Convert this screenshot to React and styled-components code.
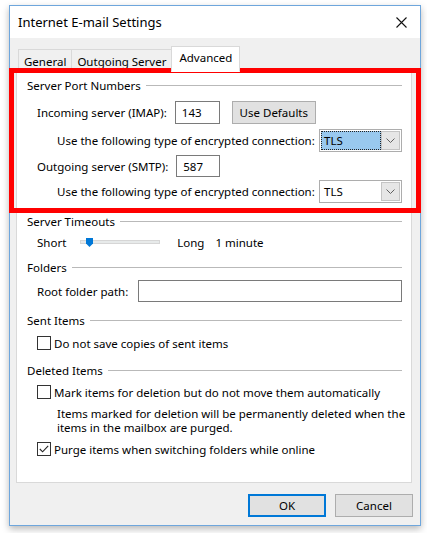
import React from 'react';
import styled, { createGlobalStyle } from 'styled-components';

const GlobalStyle = createGlobalStyle`
  html, body {
    margin: 0;
    padding: 0;
    background: #fff;
  }
  body {
    font-family: 'Noto Sans', 'Segoe UI', sans-serif;
    font-size: 11.5px;
    color: #000;
  }
`;

const Page = styled.div`
  position: relative;
  width: 427px;
  height: 533px;
  overflow: hidden;
  padding: 5px 0 0 9px;
  box-sizing: border-box;
`;

const Window = styled.div`
  width: 412px;
  height: 521px;
  box-sizing: border-box;
  border: 1px solid #6ea6dc;
  background: #f0f0f0;
  box-shadow: 0 3px 7px rgba(0, 0, 0, 0.28);
  display: flex;
  flex-direction: column;
`;

const TitleBar = styled.div`
  height: 32px;
  background: #fff;
  display: flex;
  align-items: center;
  justify-content: space-between;
  padding: 0 13px 0 8px;
  font-size: 13px;
`;

const Body = styled.div`
  flex: 1;
  display: flex;
  flex-direction: column;
  padding: 8px 8px 0 6px;
`;

const TabRow = styled.div`
  display: flex;
  align-items: flex-end;
  height: 26px;
  padding-left: 2px;
  margin-bottom: -1px;
`;

const Tab = styled.div`
  position: relative;
  z-index: ${p => (p.$active ? 1 : 0)};
  height: ${p => (p.$active ? '26px' : '23px')};
  box-sizing: border-box;
  padding: ${p => (p.$active ? '3px 7px 0' : '4px 5px 0')};
  border: 1px solid #d9d9d9;
  border-bottom: ${p => (p.$active ? '1px solid #fff' : 'none')};
  margin-left: ${p => (p.$first ? '0' : '-1px')};
  background: ${p => (p.$active ? '#fff' : '#f0f0f0')};
  white-space: nowrap;
`;

const Panel = styled.div`
  height: 412px;
  box-sizing: border-box;
  background: #fff;
  border: 1px solid #d9d9d9;
  padding: 5px 9px 0 10px;
  display: flex;
  flex-direction: column;
`;

const GroupTitle = styled.div`
  display: flex;
  align-items: center;
  height: 16px;
  margin-top: ${p => p.$top || 0}px;
  white-space: nowrap;

  &::after {
    content: '';
    flex: 1;
    height: 1px;
    margin-left: 5px;
    background: #b9b9b9;
  }
`;

const Row = styled.div`
  display: flex;
  align-items: center;
  height: ${p => p.$h || 16}px;
  margin-top: ${p => p.$top || 0}px;
  padding-left: ${p => p.$indent || 10}px;
  white-space: nowrap;
`;

const SpreadRow = styled(Row)`
  justify-content: space-between;
`;

const TextInput = styled.div`
  width: ${p => (p.$w ? `${p.$w}px` : 'auto')};
  flex: ${p => (p.$grow ? 1 : 'none')};
  height: ${p => p.$h || 22}px;
  box-sizing: border-box;
  border: 1px solid #7a7a7a;
  margin-left: ${p => p.$gap || 8}px;
  padding-left: 6px;
  display: flex;
  align-items: center;
`;

const Button = styled.div`
  width: ${p => p.$w || 78}px;
  height: 23px;
  box-sizing: border-box;
  margin-left: ${p => p.$gap || 0}px;
  background: #e1e1e1;
  border: 1px solid ${p => (p.$default ? '#0078d7' : '#adadad')};
  box-shadow: ${p => (p.$default ? 'inset 0 0 0 1px #0078d7' : 'none')};
  display: flex;
  align-items: center;
  justify-content: center;
`;

const Combo = styled.div`
  width: 83px;
  height: 23px;
  box-sizing: border-box;
  border: 1px solid #adadad;
  background: #fff;
  padding: 1px;
  display: flex;
`;

const ComboValue = styled.div`
  flex: 1;
  box-sizing: border-box;
  padding-left: 2px;
  display: flex;
  align-items: center;
  background: ${p => (p.$focused ? '#99c9ef' : '#fff')};
  border: 1px dotted ${p => (p.$focused ? '#222' : 'transparent')};
`;

const ComboArrow = styled.div`
  width: 19px;
  box-sizing: border-box;
  border: 1px solid #c4c4c4;
  background: #e6e6e6;
  display: flex;
  align-items: center;
  justify-content: center;
`;

const Slider = styled.div`
  position: relative;
  width: 80px;
  height: 4px;
  box-sizing: border-box;
  margin: 0 17px 0 14px;
  background: #e7eaea;
  border: 1px solid #d6d6d6;
`;

const Thumb = styled.svg`
  position: absolute;
  left: 5px;
  top: -3px;
`;

const Spacer = styled.span`
  display: inline-block;
  width: ${p => p.$w}px;
`;

const Check = styled.div`
  width: 14px;
  height: 14px;
  box-sizing: border-box;
  border: 1px solid #333;
  background: #fff;
  margin-right: 3px;
  display: flex;
  align-items: center;
  justify-content: center;
`;

const Note = styled.div`
  margin-top: ${p => p.$top || 0}px;
  padding-left: 30px;
  line-height: 14px;
  white-space: nowrap;
`;

const Footer = styled.div`
  display: flex;
  justify-content: flex-end;
  gap: 9px;
  padding: 11px 0 0;
  margin-right: -1px;
`;

const Highlight = styled.div`
  position: absolute;
  left: 9px;
  top: 68px;
  width: 412px;
  height: 145px;
  box-sizing: border-box;
  border: 5px solid #ff0000;
  pointer-events: none;
`;

const Chevron = () => (
  <svg width="9" height="5" viewBox="0 0 9 5">
    <path d="M0.5 0.5 L4.5 4.5 L8.5 0.5" fill="none" stroke="#606060" strokeWidth="1" />
  </svg>
);

const CheckBox = ({ checked }) => (
  <Check>
    {checked && (
      <svg width="10" height="8" viewBox="0 0 10 8">
        <path d="M0.8 4 L3.6 6.8 L9.2 0.8" fill="none" stroke="#222" strokeWidth="1.1" />
      </svg>
    )}
  </Check>
);

const CloseIcon = () => (
  <svg width="11" height="11" viewBox="0 0 11 11">
    <path d="M0.5 0.5 L10.5 10.5 M10.5 0.5 L0.5 10.5" stroke="#111" strokeWidth="1.1" />
  </svg>
);

const ComboBox = ({ value, focused }) => (
  <Combo>
    <ComboValue $focused={focused}>{value}</ComboValue>
    <ComboArrow>
      <Chevron />
    </ComboArrow>
  </Combo>
);

export default function App() {
  return (
    <Page>
      <GlobalStyle />
      <Window>
        <TitleBar>
          <span>Internet E-mail Settings</span>
          <CloseIcon />
        </TitleBar>
        <Body>
          <TabRow>
            <Tab $first>General</Tab>
            <Tab>Outgoing Server</Tab>
            <Tab $active>Advanced</Tab>
          </TabRow>
          <Panel>
            <GroupTitle>Server Port Numbers</GroupTitle>
            <Row $top={7} $h={24}>
              Incoming server (IMAP):
              <TextInput $w={45} $h={23}>143</TextInput>
              <Button $w={84} $gap={12}>Use Defaults</Button>
            </Row>
            <SpreadRow $top={4} $h={24} $indent={30}>
              Use the following type of encrypted connection:
              <ComboBox value="TLS" focused />
            </SpreadRow>
            <Row $top={3} $h={22}>
              Outgoing server (SMTP):
              <TextInput $w={44}>587</TextInput>
            </Row>
            <SpreadRow $top={3} $h={23} $indent={30}>
              Use the following type of encrypted connection:
              <ComboBox value="TLS" />
            </SpreadRow>

            <GroupTitle $top={10}>Server Timeouts</GroupTitle>
            <Row $top={5}>
              Short
              <Slider>
                <Thumb width="7" height="9" viewBox="0 0 7 9">
                  <path d="M0 0 H7 V5.5 L3.5 9 L0 5.5 Z" fill="#0078d7" />
                </Thumb>
              </Slider>
              Long<Spacer $w={11} />1 minute
            </Row>

            <GroupTitle $top={9}>Folders</GroupTitle>
            <Row $top={5} $h={22}>
              Root folder path:
              <TextInput $grow $gap={10} />
            </Row>

            <GroupTitle $top={10}>Sent Items</GroupTitle>
            <Row $top={7}>
              <CheckBox />
              Do not save copies of sent items
            </Row>

            <GroupTitle $top={11}>Deleted Items</GroupTitle>
            <Row $top={6}>
              <CheckBox />
              Mark items for deletion but do not move them automatically
            </Row>
            <Note $top={7}>
              Items marked for deletion will be permanently deleted when the
              <br />
              items in the mailbox are purged.
            </Note>
            <Row $top={6}>
              <CheckBox checked />
              Purge items when switching folders while online
            </Row>
          </Panel>
          <Footer>
            <Button $default>OK</Button>
            <Button>Cancel</Button>
          </Footer>
        </Body>
      </Window>
      <Highlight />
    </Page>
  );
}
